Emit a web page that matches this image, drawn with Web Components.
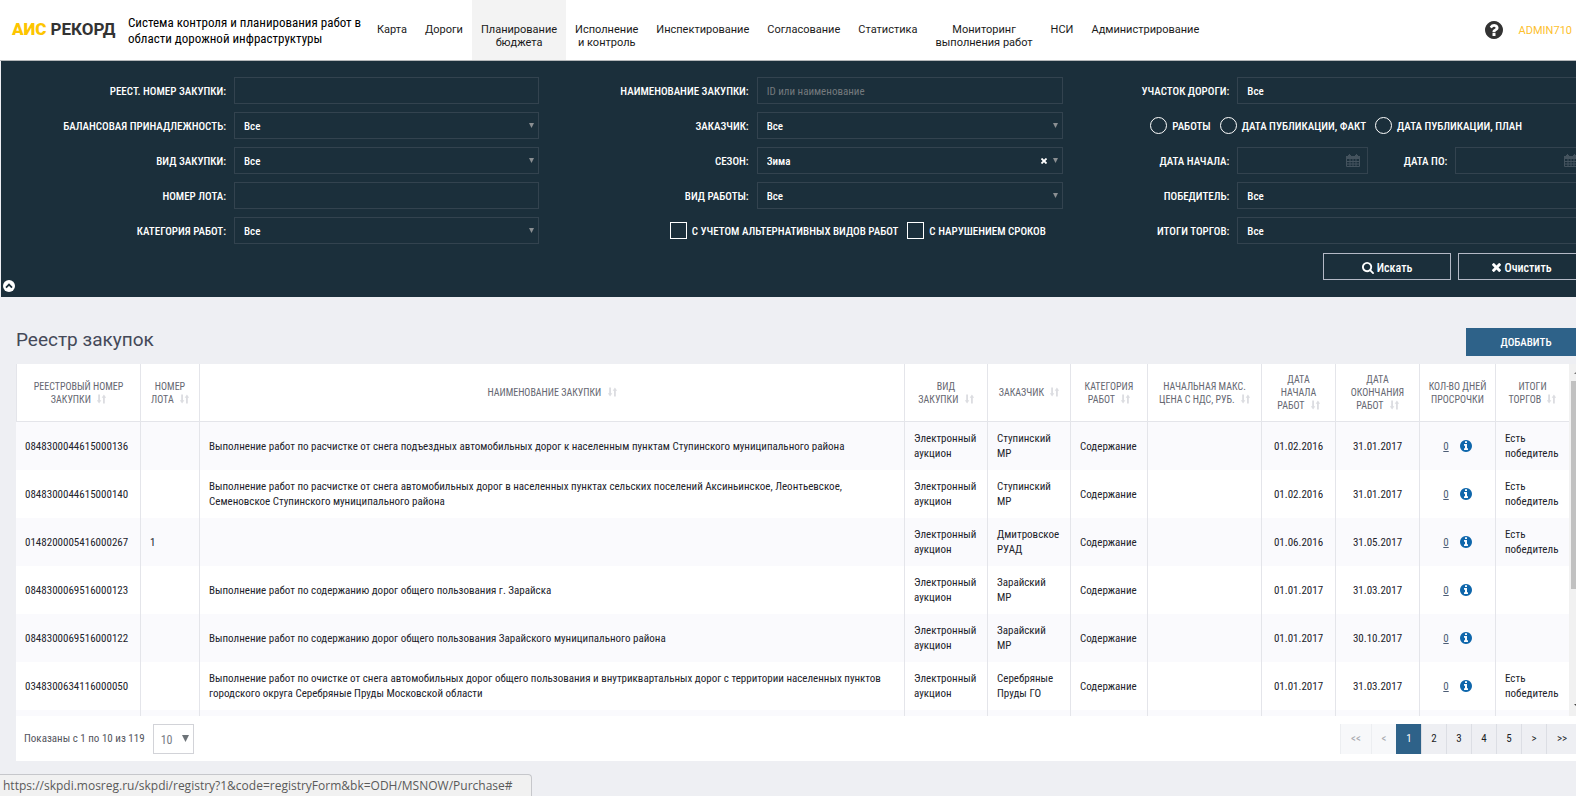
<!DOCTYPE html>
<html lang="ru">
<head>
<meta charset="utf-8">
<title>Реестр закупок</title>
<style>
html, body { margin: 0; }
body { min-height: 100vh; background: #eeeff3; overflow: hidden; font-family: "Roboto Condensed", Roboto, sans-serif; font-size: 11px; color: #24242c; }
</style>
</head>
<body>
<rk-app></rk-app>
<script>
const define = (name, html, setup) => customElements.define(name, class extends HTMLElement {
  connectedCallback() {
    if (this.shadowRoot) return;
    const root = this.attachShadow({ mode: 'open' });
    root.innerHTML = typeof html === 'function' ? html(this) : html;
    if (setup) setup(this, root);
  }
});

const DISC = 'm640 416q0 209-103 385.5t-279.5 279.5-385.5 103-385.5-103-279.5-279.5-103-385.5 103-385.5 279.5-279.5 385.5-103 385.5 103 279.5 279.5 103 385.5z';
const ICONS = {
  help: ['0 0 1536 1536', '<path d="M896 1248v-192q0-14-9-23t-23-9h-192q-14 0-23 9t-9 23v192q0 14 9 23t23 9h192q14 0 23-9t9-23zm256-672q0-88-55.5-163t-138.5-116-170-41q-243 0-371 213-15 24 8 42l132 100q7 6 19 6 16 0 25-12 53-68 86-92 34-24 86-24 48 0 85.5 26t37.5 59q0 38-20 61t-68 45q-63 28-115.5 86.5t-52.5 125.5v36q0 14 9 23t23 9h192q14 0 23-9t9-23q0-19 21.5-49.5t54.5-49.5q32-18 49-28.5t46-35 44.5-48 28-60.5 12.5-81zm384 192q0 209-103 385.5t-279.5 279.5-385.5 103-385.5-103-279.5-279.5-103-385.5 103-385.5 279.5-279.5 385.5-103 385.5 103 279.5 279.5 103 385.5z"/>'],
  info: ['0 0 1536 1536', '<path d="M1024 1248v-160q0-14-9-23t-23-9h-96v-512q0-14-9-23t-23-9h-320q-14 0-23 9t-9 23v160q0 14 9 23t23 9h96v320h-96q-14 0-23 9t-9 23v160q0 14 9 23t23 9h448q14 0 23-9t9-23zm-128-896v-160q0-14-9-23t-23-9h-192q-14 0-23 9t-9 23v160q0 14 9 23t23 9h192q14 0 23-9t9-23z' + DISC + '"/>'],
  search: ['0 0 1664 1664', '<path d="M1152 704q0-185-131.5-316.5t-316.5-131.5-316.5 131.5-131.5 316.5 131.5 316.5 316.5 131.5 316.5-131.5 131.5-316.5zm512 832q0 52-38 90t-90 38q-54 0-90-38l-343-342q-179 124-399 124-143 0-273.5-55.5t-225-150-150-225-55.5-273.5 55.5-273.5 150-225 225-150 273.5-55.5 273.5 55.5 225 150 150 225 55.5 273.5q0 220-124 399l343 343q37 37 37 90z"/>'],
  times: ['110 258 1188 1188', '<path d="M1298 1214q0 40-28 68l-136 136q-28 28-68 28t-68-28l-294-294-294 294q-28 28-68 28t-68-28l-136-136q-28-28-28-68t28-68l294-294-294-294q-28-28-28-68t28-68l136-136q28-28 68-28t68 28l294 294 294-294q28-28 68-28t68 28l136 136q28 28 28 68t-28 68l-294 294 294 294q28 28 28 68z"/>'],
  up: ['0 0 12 12', '<circle cx="6" cy="6" r="6"/><path d="M3 7.6 6 4.6l3 3" fill="none" stroke="#1b2f3b" stroke-width="1.8"/>'],
  calendar: ['0 0 14 13', '<path d="M0 2h2V1h3v1h4V1h3v1h2v3H0z"/><path d="M3 0h1v3H3zM10 0h1v3h-1z"/><path d="M.5 4.500v8h13v-8M4 5v7M7 5v7M10 5v7M1 7.500h12M1 10h12" fill="none" stroke="currentColor"/>'],
  sort: ['0 0 10 10', '<path d="M1.300 0h2v6.500h1.500L2.300 10-.200 6.500h1.500zM6.700 10h2V3.500h1.500L7.700 0 5.200 3.500h1.500z"/>'],
  caret: ['0 0 6 6', '<path d="M0 0h6L3 6z"/>']
};
define('rk-icon', el => {
  const [box, body] = ICONS[el.getAttribute('name')];
  return `<style>:host{display:inline-block;width:12px;height:12px;flex:none}svg{display:block;width:100%;height:100%;fill:currentColor}</style><svg viewBox="${box}" aria-hidden="true">${body}</svg>`;
});

/* header */
define('rk-nav-item', el => `<style>
:host{display:block}
a{display:block;box-sizing:border-box;height:60px;padding:23px 9px 0;text-align:center;color:#1a1a1a;text-decoration:none;font:11px/13px Roboto,sans-serif;white-space:nowrap}
:host([active]) a{background:#f3f3f3}
</style><a href="#"><slot></slot></a>`);

define('rk-header', `<style>
:host{display:flex;height:60px;background:#fff;border-bottom:1px solid #b5b8ba;padding-right:14px}
.logo{width:116px;padding:19px 0 0 12px;font:700 17px/20px Roboto,sans-serif;color:#333;white-space:nowrap;text-decoration:none;box-sizing:border-box}
.logo b{color:#fdc500;margin-right:4px}
.name{margin:15px 0 0 12px;width:240px;font-size:13px;line-height:16px;color:#000;white-space:nowrap}
nav{display:flex}
.user{margin-left:auto;display:flex;align-items:center;gap:16px;color:#333}
.user rk-icon{width:18px;height:18px}
.user a{color:#fdbf2d;font:11px/14px Roboto,sans-serif;text-decoration:none;padding-top:2px}
</style>
<a class="logo" href="#"><b>АИС</b>РЕКОРД</a>
<div class="name">Система контроля и планирования работ в<br>области дорожной инфраструктуры</div>
<nav>
<rk-nav-item>Карта</rk-nav-item><rk-nav-item>Дороги</rk-nav-item><rk-nav-item active>Планирование<br>бюджета</rk-nav-item>
<rk-nav-item>Исполнение<br>и контроль</rk-nav-item><rk-nav-item>Инспектирование</rk-nav-item><rk-nav-item>Согласование</rk-nav-item>
<rk-nav-item>Статистика</rk-nav-item><rk-nav-item>Мониторинг<br>выполнения работ</rk-nav-item><rk-nav-item>НСИ</rk-nav-item><rk-nav-item>Администрирование</rk-nav-item>
</nav>
<div class="user"><rk-icon name="help"></rk-icon><a href="#">ADMIN710</a></div>`);

/* labelled filter field: text, date or select */
define('rk-field', el => {
  const type = el.getAttribute('type') || 'text', value = el.getAttribute('value') || '', label = el.getAttribute('label');
  const control = type === 'select'
    ? `<select id="c"><option>${value}</option></select><span class="marks">${el.hasAttribute('clearable') ? '<button aria-label="Сбросить"><rk-icon name="times"></rk-icon></button>' : ''}<rk-icon class="caret" name="caret"></rk-icon></span>`
    : `<input id="c" type="text" placeholder="${el.getAttribute('placeholder') || ''}">${type === 'date' ? '<span class="marks"><rk-icon class="cal" name="calendar"></rk-icon></span>' : ''}`;
  return `<style>
:host{display:flex;align-items:center;gap:8px;height:27px;color:#fff}
label{flex:0 0 var(--label,120px);padding-top:1px;text-align:right;white-space:nowrap;font-weight:500;text-transform:uppercase}
.box{flex:1;min-width:0;position:relative;display:flex}
input,select{appearance:none;width:100%;height:27px;box-sizing:border-box;margin:0;padding:1px 9px 0;border:1px solid #33434f;border-radius:0;background:transparent;color:#fff;font:inherit;font-weight:500;outline:0}
input::placeholder{color:#74797d;font-weight:400;opacity:1}
.marks{position:absolute;right:5px;top:0;height:100%;display:flex;align-items:center;gap:6px;color:#8b8f92}
:host([type=date]) .marks{right:8px;color:#44535e}
button{border:0;padding:0;background:none;color:#fff;display:flex}
button rk-icon{width:6px;height:6px}
.caret{width:5px;height:5px}.cal{width:14px;height:13px}
</style><label for="c">${label}:</label><div class="box">${control}</div>`;
});

define('rk-choice', el => `<style>
:host{display:block;color:#fff}
label{display:flex;align-items:center;gap:5px;white-space:nowrap;font-weight:500;text-transform:uppercase}
input{appearance:none;margin:0;width:17px;height:17px;box-sizing:border-box;border:1px solid #fff}
input[type=radio]{border-radius:50%}
span{padding-top:2px}
</style><label><input type="${el.getAttribute('type')}" name="period"><span><slot></slot></span></label>`);

define('rk-action', `<style>
:host{display:block}
button{width:128px;height:27px;display:flex;align-items:center;justify-content:center;gap:3px;background:none;border:1px solid #b4b9c6;color:#fff;font:inherit;font-size:12px;font-weight:500;padding:2px 0 0}
</style><button><slot></slot></button>`);

define('rk-filters', `<style>
:host{display:block;position:relative;box-sizing:border-box;margin-left:1px;padding:16px 0 17px;background:#1b2f3b}
.cols{display:grid;grid-template-columns:538fr 525fr 523fr}
.col{display:grid;gap:8px;align-content:start}
.c1{--label:225px}.c2{--label:210px}.c3{--label:166px}
.choices{display:flex;align-items:center;gap:9px;height:27px}
.c2 .choices{padding-left:131px}.c3 .choices{padding-left:87px}
.dates{display:grid;grid-template-columns:305px 1fr;}
.dates rk-field+rk-field{--label:79px}
.buttons{display:flex;justify-content:flex-end;gap:7px;padding-top:1px}
.fold{position:absolute;left:2px;bottom:5px;border:0;padding:0;background:none;color:#fff;display:flex}
</style>
<div class="cols">
<div class="col c1"><rk-field label="Реест. номер закупки"></rk-field><rk-field type="select" label="Балансовая принадлежность" value="Все"></rk-field><rk-field type="select" label="Вид закупки" value="Все"></rk-field><rk-field label="Номер лота"></rk-field><rk-field type="select" label="Категория работ" value="Все"></rk-field></div>
<div class="col c2"><rk-field label="Наименование закупки" placeholder="ID или наименование"></rk-field><rk-field type="select" label="Заказчик" value="Все"></rk-field><rk-field type="select" label="Сезон" value="Зима" clearable></rk-field><rk-field type="select" label="Вид работы" value="Все"></rk-field>
<div class="choices"><rk-choice type="checkbox">С учетом альтернативных видов работ</rk-choice><rk-choice type="checkbox">С нарушением сроков</rk-choice></div></div>
<div class="col c3"><rk-field type="select" label="Участок дороги" value="Все"></rk-field>
<div class="choices"><rk-choice type="radio">Работы</rk-choice><rk-choice type="radio">Дата публикации, факт</rk-choice><rk-choice type="radio">Дата публикации, план</rk-choice></div>
<div class="dates"><rk-field type="date" label="Дата начала"></rk-field><rk-field type="date" label="Дата по"></rk-field></div>
<rk-field type="select" label="Победитель" value="Все"></rk-field><rk-field type="select" label="Итоги торгов" value="Все"></rk-field>
<div class="buttons"><rk-action><rk-icon name="search"></rk-icon>Искать</rk-action><rk-action><rk-icon name="times" style="width:9px;height:9px"></rk-icon>Очистить</rk-action></div></div>
</div>
<button class="fold" aria-label="Свернуть"><rk-icon name="up"></rk-icon></button>`);

/* registry table */
const COLS = [['Реестровый номер<br>закупки', 125, 1], ['Номер<br>лота', 59, 1], ['Наименование закупки', 0, 1], ['Вид<br>закупки', 83, 1], ['Заказчик', 83, 1], ['Категория<br>работ', 77, 1], ['Начальная макс.<br>цена с НДС, руб.', 114, 1], ['Дата<br>начала<br>работ', 74, 1], ['Дата<br>окончания<br>работ', 84, 1], ['Кол-во дней<br>просрочки', 76, 0], ['Итоги<br>торгов', 73, 1]];
const EL = 'Электронный<br>аукцион', WIN = 'Есть<br>победитель';
const ROWS = [
  ['0848300044615000136', '', 'Выполнение работ по расчистке от снега подъездных автомобильных дорог к населенным пунктам Ступинского муниципального района', 'Ступинский<br>МР', '01.02.2016', '31.01.2017', WIN],
  ['0848300044615000140', '', 'Выполнение работ по расчистке от снега автомобильных дорог в населенных пунктах сельских поселений Аксиньинское, Леонтьевское,<br>Семеновское Ступинского муниципального района', 'Ступинский<br>МР', '01.02.2016', '31.01.2017', WIN],
  ['0148200005416000267', '1', '', 'Дмитровское<br>РУАД', '01.06.2016', '31.05.2017', WIN],
  ['0848300069516000123', '', 'Выполнение работ по содержанию дорог общего пользования г. Зарайска', 'Зарайский<br>МР', '01.01.2017', '31.03.2017', ''],
  ['0848300069516000122', '', 'Выполнение работ по содержанию дорог общего пользования Зарайского муниципального района', 'Зарайский<br>МР', '01.01.2017', '30.10.2017', ''],
  ['0348300634116000050', '', 'Выполнение работ по очистке от снега автомобильных дорог общего пользования и внутриквартальных дорог с территории населенных пунктов<br>городского округа Серебряные Пруды Московской области', 'Серебряные<br>Пруды ГО', '01.01.2017', '31.03.2017', WIN]
];
define('rk-table', () => `<style>
:host{display:flex;height:352px;overflow:hidden;background:#fff}
.view{flex:1;min-width:0;overflow:hidden}
table{width:100%;table-layout:fixed;border-collapse:separate;border-spacing:0}
th{height:57px;padding:0;border-right:1px solid #e4e5ea;border-bottom:1px solid #e4e5ea;font-size:10px;line-height:13px;font-weight:400;color:#666872;text-transform:uppercase;white-space:nowrap}
th:first-child{border-left:1px solid #e4e5ea}
th rk-icon{width:9px;height:10px;color:#dcdde1;margin-left:4px;vertical-align:-1px}
td{height:48px;padding:0 9px;border-right:1px solid #e4e5ea;line-height:15px;white-space:nowrap;color:#22232b}
th:last-child,td:last-child{border-right:0}
tbody tr:nth-child(odd){background:#fafafd}
.c{text-align:center}
.days{display:flex;justify-content:center;align-items:center;gap:11px}
.days a{color:#4c5c75}
.days rk-icon{color:#0e66ab}
.bar{width:17px;background:#f1f1f1;display:flex;flex-direction:column;align-items:center;justify-content:space-between}
.bar i{border:4px solid transparent;height:0;width:0}
.bar .u{border-bottom-color:#777;margin-top:2px}.bar .d{border-top-color:#444;margin-bottom:4px}
.bar .t{width:13px;height:208px;background:#c1c1c1;margin-bottom:auto;margin-top:7px}
</style>
<div class="view"><table><colgroup>${COLS.map(c => `<col${c[1] ? ` style="width:${c[1]}px"` : ''}>`).join('')}</colgroup>
<thead><tr>${COLS.map(c => `<th>${c[0]}${c[2] ? ' <rk-icon name="sort"></rk-icon>' : ''}</th>`).join('')}</tr></thead>
<tbody>${ROWS.map(r => `<tr><td>${r[0]}</td><td>${r[1]}</td><td>${r[2]}</td><td>${EL}</td><td>${r[3]}</td><td>Содержание</td><td></td><td class="c">${r[4]}</td><td class="c">${r[5]}</td><td><div class="days"><a href="#">0</a><rk-icon name="info"></rk-icon></div></td><td>${r[6]}</td></tr>`).join('')}<tr>${'<td></td>'.repeat(11)}</tr></tbody></table></div>
<div class="bar"><i class="u"></i><div class="t"></div><i class="d"></i></div>`);

define('rk-pager', `<style>
:host{display:flex;align-items:center;height:45px;padding:0 9px 0 8px;background:#fff;color:#54565e}
.size{position:relative;margin-left:8px;display:flex}
select{appearance:none;width:41px;height:30px;padding:2px 0 0 7px;border:1px solid #d2d3d8;border-radius:0;background:#fff;color:#777c84;font:inherit;font-size:12px}
.size rk-icon{position:absolute;right:5px;top:11px;width:7px;height:7px;color:#6d7378}
nav{margin-left:auto;display:flex;height:30px}
a{width:25px;box-sizing:border-box;border-left:1px solid #dcdee4;background:#eeeff3;color:#1c1e26;line-height:30px;text-align:center;text-decoration:none}
a.w{width:31px}
a.off{background:#f7f8fa;color:#a9abb1;border-color:#eceef1}
a.on{background:#2e6289;border-color:#2e6289;color:#fff}
</style>
<label for="n">Показаны с 1 по 10 из 119</label><span class="size"><select id="n"><option>10</option></select><rk-icon name="caret"></rk-icon></span>
<nav><a class="off w" href="#">&lt;&lt;</a><a class="off" href="#">&lt;</a><a class="on" href="#">1</a><a href="#">2</a><a href="#">3</a><a href="#">4</a><a href="#">5</a><a href="#">&gt;</a><a class="w" href="#">&gt;&gt;</a></nav>`);

define('rk-app', `<style>
:host{display:block;width:calc(100% + 10px)}
.head{display:flex;justify-content:space-between;margin:31px 0 8px 16px}
h1{margin:0;font:400 19px/24px Roboto,sans-serif;color:#444958}
.head button{width:120px;height:28px;border:0;background:#2e6289;color:#fff;font:inherit;font-weight:500;text-transform:uppercase}
.panel{margin-left:16px}
.status{position:fixed;left:0;bottom:0;box-sizing:border-box;width:532px;height:22px;padding-left:3px;background:#f1f1f1;border:solid #c6c7cb;border-width:1px 1px 0 0;border-radius:0 4px 0 0;font:12px/22px "Open Sans",sans-serif;color:#5a5a5a;white-space:nowrap}
</style>
<rk-header></rk-header><rk-filters></rk-filters>
<div class="head"><h1>Реестр закупок</h1><button>Добавить</button></div>
<div class="panel"><rk-table></rk-table><rk-pager></rk-pager></div>
<div class="status">https://skpdi.mosreg.ru/skpdi/registry?1&amp;code=registryForm&amp;bk=ODH/MSNOW/Purchase#</div>`);
</script>
</body>
</html>
